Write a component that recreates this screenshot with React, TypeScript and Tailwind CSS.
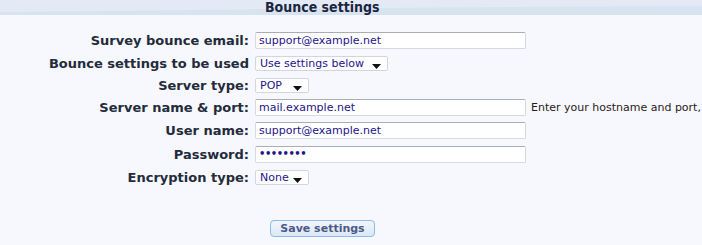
import React from "react";

const font = { fontFamily: '"DejaVu Sans", Verdana, sans-serif' };

function Arrow() {
  return (
    <svg width="9" height="5" viewBox="0 0 9 5" className="absolute right-[6px] top-[7px]">
      <path d="M0 0 H9 L4.5 5 Z" fill="#111" />
    </svg>
  );
}

function Input({ value, password }: { value: string; password?: boolean }) {
  return (
    <div className="shrink-0 w-[271px] h-[17px] bg-white border border-[#d6d9e0] border-t-[#a9adb5] rounded-[2px] flex items-center pl-[3px] text-[11px] text-[#24148c] leading-none">
      {password ? <span className="text-[10px] font-bold tracking-[-0.5px]">••••••••</span> : value}
    </div>
  );
}

function Select({ value, w }: { value: string; w: string }) {
  return (
    <div className={`relative shrink-0 ${w} h-[15px] bg-white border border-[#d3d6dc] rounded-[2px] flex items-center pl-[4px] text-[11px] text-[#24148c] leading-none`}>
      {value}
      <Arrow />
    </div>
  );
}

function Row({ label, h, children }: { label: string; h: string; children: React.ReactNode }) {
  return (
    <div className={`flex items-center ${h}`}>
      <div className="shrink-0 w-[250px] pr-[1px] text-right font-bold text-[13px] text-[#242b3b] leading-none whitespace-nowrap">{label}</div>
      <div className="ml-[5px] flex items-center min-w-0">{children}</div>
    </div>
  );
}

export default function App() {
  return (
    <div className="w-[702px] h-[245px] bg-[#f6f8fd] overflow-hidden" style={font}>
      <div className="relative h-[15px] bg-[#e3eaf5] overflow-hidden">
        <svg className="absolute inset-0" width="702" height="15" viewBox="0 0 702 15" preserveAspectRatio="none">
          <path d="M0 12 C200 10 400 7 702 6 V15 H0 Z" fill="#d8e3f1" />
        </svg>
        <div
          className="relative pl-[265px] text-[14px] font-bold text-[#1c2540] leading-[15px] whitespace-nowrap"
          style={{ fontFamily: '"DejaVu Sans Condensed", "DejaVu Sans", sans-serif', fontStretch: "condensed" }}
        >
          Bounce settings
        </div>
      </div>
      <div className="pt-[14px]">
        <Row label="Survey bounce email:" h="h-[23px]">
          <Input value="support@example.net" />
        </Row>
        <Row label="Bounce settings to be used" h="h-[22px]">
          <Select value="Use settings below" w="w-[133px]" />
        </Row>
        <Row label="Server type:" h="h-[22px]">
          <Select value="POP" w="w-[54px]" />
        </Row>
        <Row label="Server name & port:" h="h-[22px]">
          <Input value="mail.example.net" />
          <span className="ml-[5px] text-[11px] text-[#2b1a1a] whitespace-nowrap leading-none">Enter your hostname and port,</span>
        </Row>
        <Row label="User name:" h="h-[24px]">
          <Input value="support@example.net" />
        </Row>
        <Row label="Password:" h="h-[24px]">
          <Input value="" password />
        </Row>
        <Row label="Encryption type:" h="h-[23px]">
          <Select value="None" w="w-[54px]" />
        </Row>
        <div className="pt-[31px] pl-[270px]">
          <button className="w-[105px] h-[17px] rounded-[4px] border border-[#8dbbe6] bg-gradient-to-b from-[#f1f6fc] to-[#dbe8f6] text-[11px] font-bold text-[#4c5a85] leading-none flex items-center justify-center">
            Save settings
          </button>
        </div>
      </div>
    </div>
  );
}
